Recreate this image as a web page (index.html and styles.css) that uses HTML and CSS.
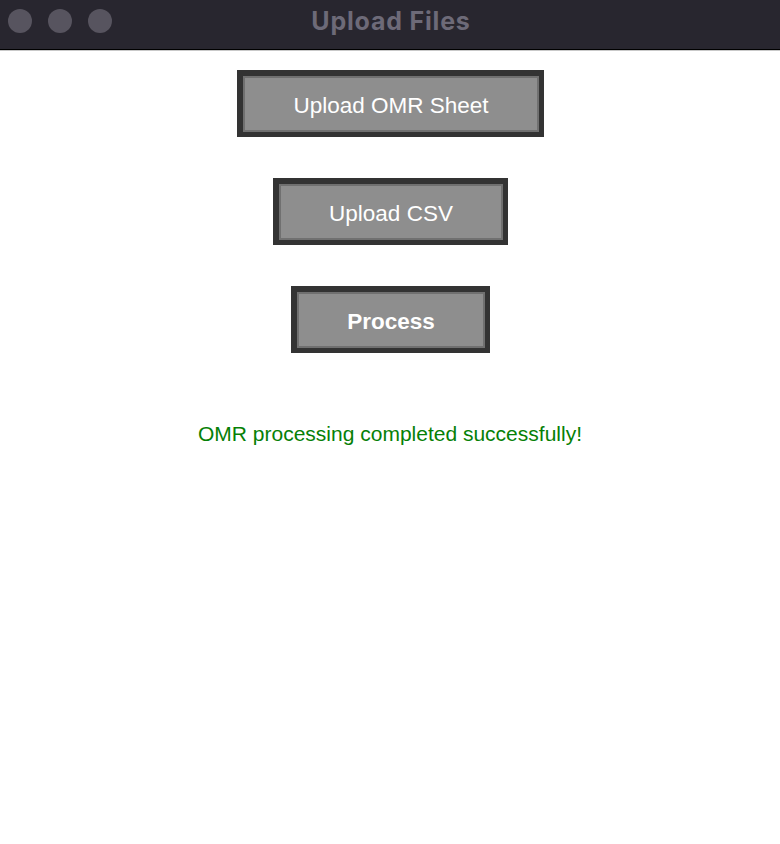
FILE: index.html
```html
<!DOCTYPE html>
<html>
<head>
<meta charset="utf-8">
<link rel="stylesheet" href="styles.css">
</head>
<body>
<div class="titlebar">
  <div class="lights">
    <span class="light"></span>
    <span class="light"></span>
    <span class="light"></span>
  </div>
  <div class="title">Upload Files</div>
</div>
<main class="content">
  <button class="btn">Upload OMR Sheet</button>
  <button class="btn">Upload CSV</button>
  <button class="btn btn-bold">Process</button>
  <p class="status">OMR processing completed successfully!</p>
</main>
</body>
</html>
```
FILE: styles.css
```css
html, body {
  margin: 0;
  padding: 0;
  background: #ffffff;
}
body {
  width: 780px;
  height: 844px;
  overflow: hidden;
  font-family: "Liberation Sans", Arial, sans-serif;
}
.titlebar {
  position: relative;
  height: 49px;
  background: #28262f;
  border-bottom: 1px solid #000000;
  box-shadow: 0 1px 0 #c9c9c9;
  display: flex;
  align-items: center;
  justify-content: center;
}
.lights {
  position: absolute;
  left: 8px;
  top: 9px;
  display: flex;
  gap: 16px;
}
.light {
  width: 24px;
  height: 24px;
  border-radius: 50%;
  background: #57545f;
}
.title {
  font-family: Inter, "Open Sans", sans-serif;
  font-weight: 700;
  font-size: 25px;
  color: #6d6a78;
  margin-left: 2px;
  margin-top: -7px;
  letter-spacing: 0.8px;
}
.content {
  display: flex;
  flex-direction: column;
  align-items: center;
  gap: 41px;
  padding-top: 20px;
}
.btn {
  box-sizing: border-box;
  height: 67px;
  border: 6px solid #333333;
  border-bottom-width: 5px;
  border-right-width: 5px;
  background: #8e8e8e;
  box-shadow: inset 0 0 0 2px #707070;
  padding: 4px 50px 0 50px;
  color: #ffffff;
  font-family: "Liberation Sans", Arial, sans-serif;
  font-size: 22.5px;
  font-weight: 400;
  margin: 0 0 0 1px;
  cursor: default;
}
.btn-bold {
  font-weight: 700;
}
.status {
  margin: 28px 0 0 0;
  font-size: 21px;
  line-height: 24px;
  color: #068006;
}
```
